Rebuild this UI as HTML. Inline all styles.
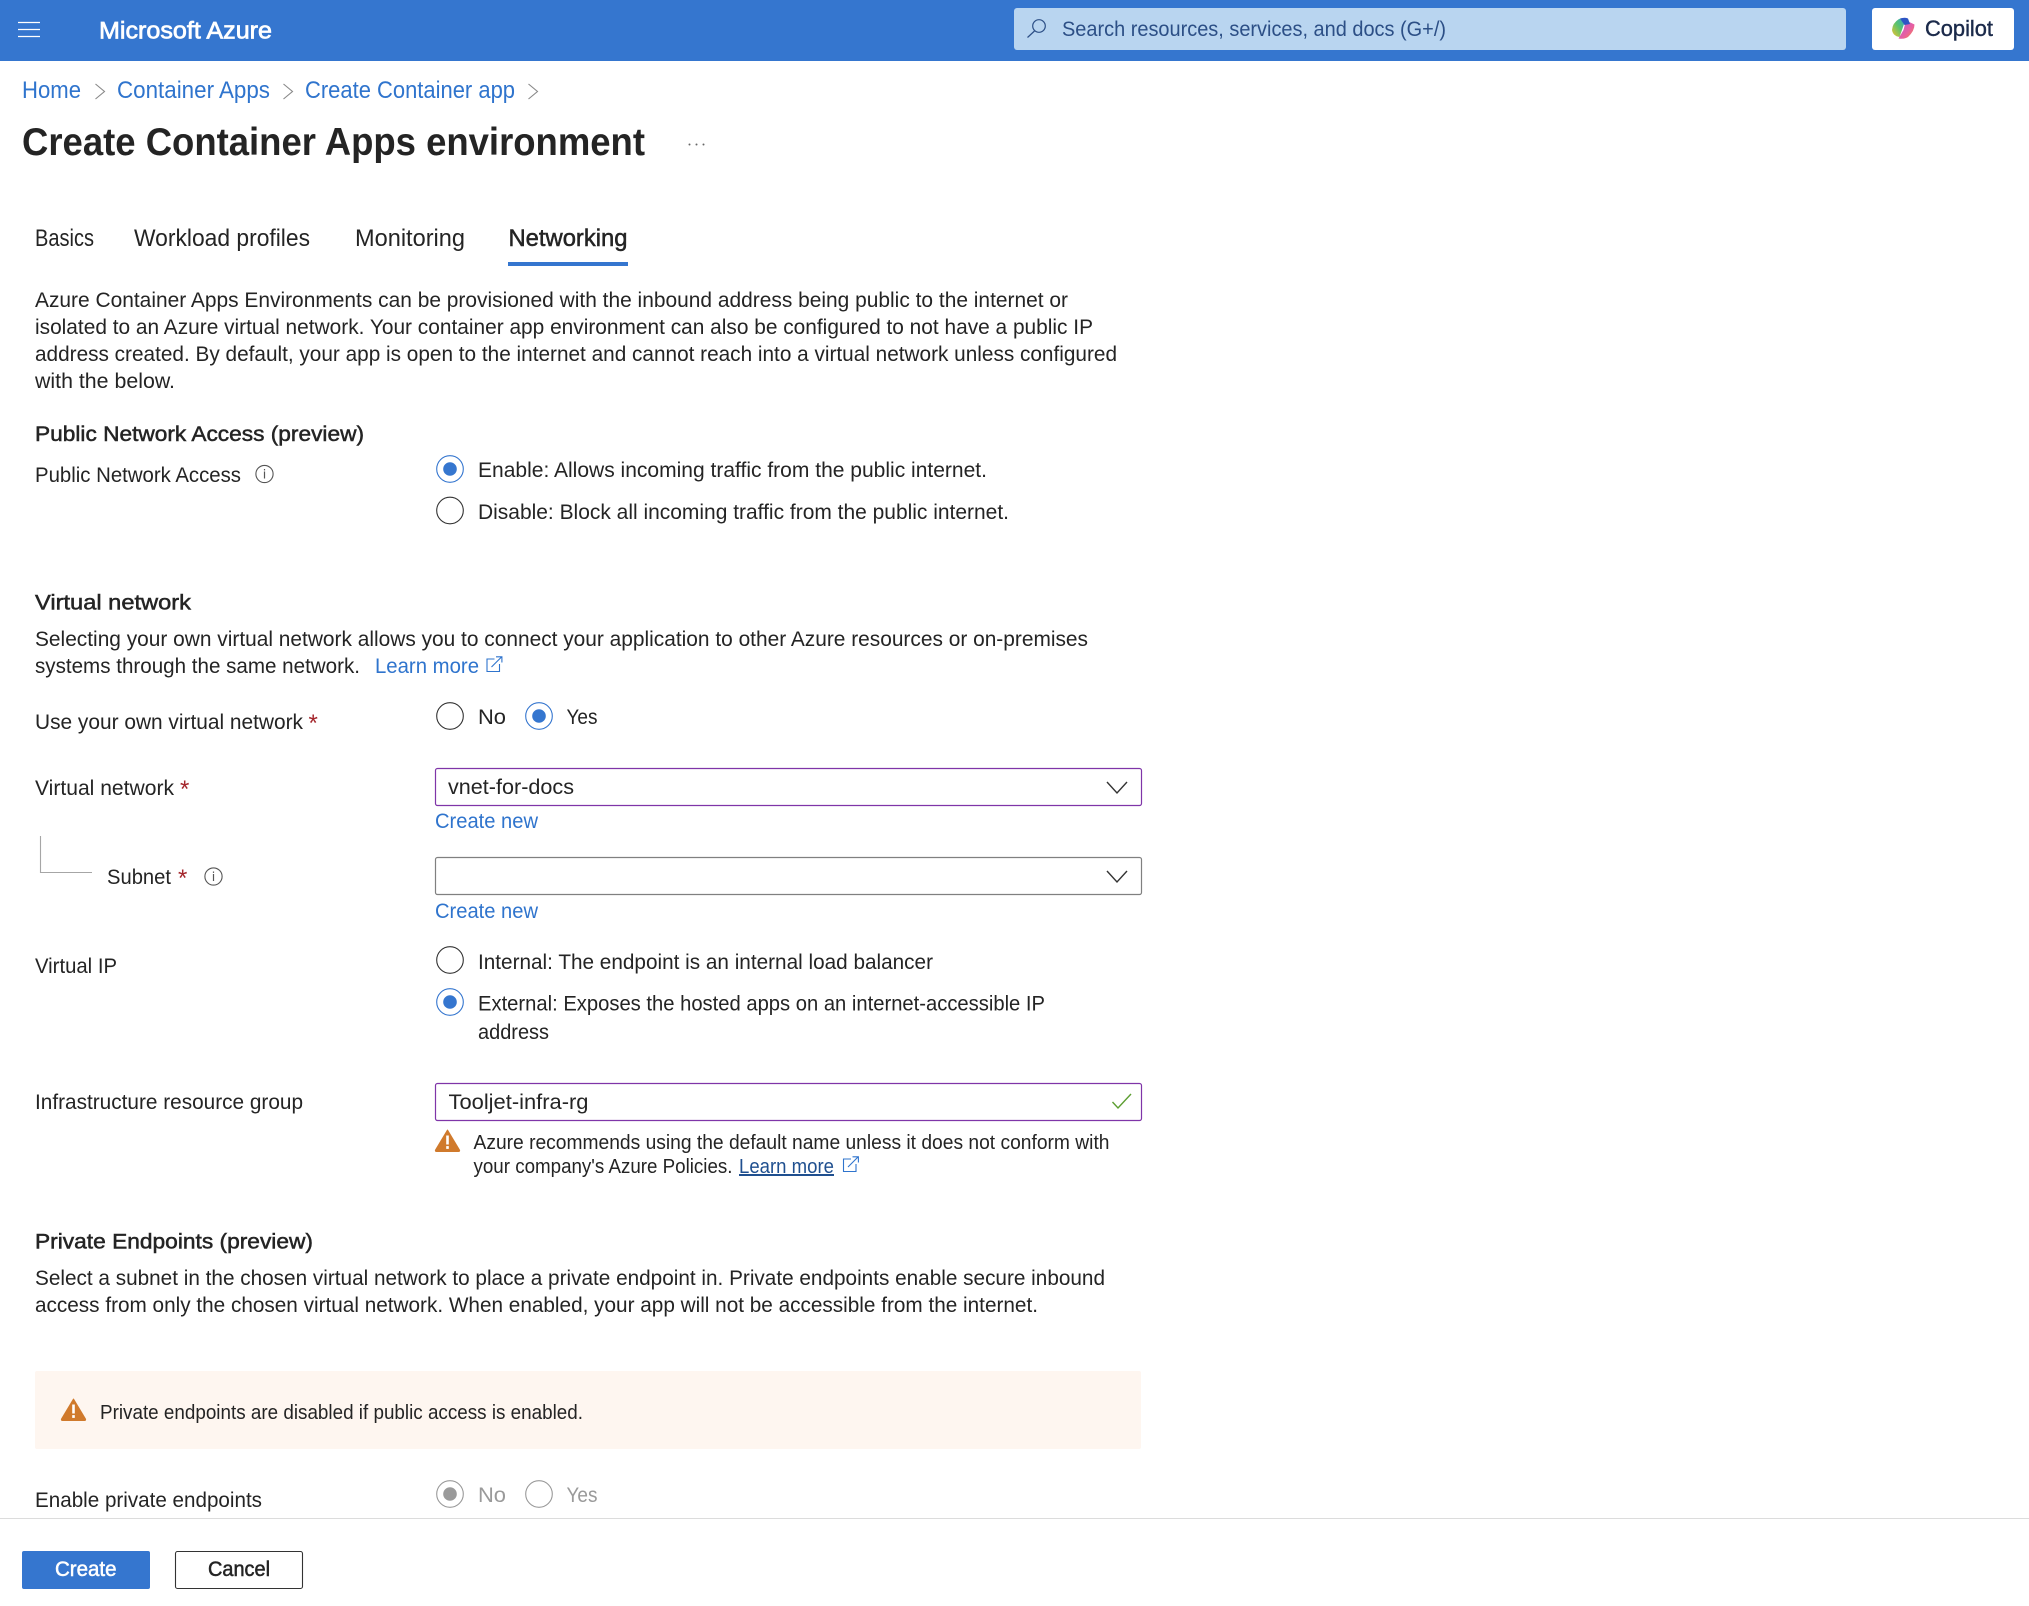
<!DOCTYPE html>
<html><head><meta charset="utf-8"><title>Create Container Apps environment</title>
<style>
html,body{margin:0;padding:0;background:#fff;width:2029px;height:1606px;overflow:hidden}
svg{display:block;font-family:"Liberation Sans",sans-serif}
text{fill:#242424;font-size:21px}
.l{fill:#2f74cd}
.s{stroke:#242424;stroke-width:.5px}
.g{fill:#9a9a9a}
.a{fill:#a4262c;font-size:24px}
</style></head><body>
<svg width="2029" height="1606" viewBox="0 0 2029 1606" xmlns="http://www.w3.org/2000/svg">
<defs>
<linearGradient id="c1" x1="0" y1="1" x2="1" y2="0"><stop offset="0" stop-color="#f2c12e"/><stop offset=".5" stop-color="#5cc46b"/><stop offset="1" stop-color="#2a9fd8"/></linearGradient>
<linearGradient id="c2" x1="0" y1="0" x2="1" y2="1"><stop offset="0" stop-color="#b45ad6"/><stop offset=".6" stop-color="#e85fa0"/><stop offset="1" stop-color="#f58a3a"/></linearGradient>
<g id="wi"><path d="M12.5 1.5 L24.5 21.5 Q25 23 23.5 23 L1.5 23 Q0 23 .5 21.5 Z" fill="#d07a2c" stroke="#d07a2c" stroke-linejoin="round"/><rect x="11.2" y="7" width="2.6" height="9" fill="#fff"/><rect x="11.2" y="17.6" width="2.6" height="2.8" fill="#fff"/></g>
<g id="ext" fill="none" stroke-width="1.1"><path d="M9 3H1.5V15.5H14V8"/><path d="M6 11L16 1M10.5 .8H16.4V6.5"/></g>
<g id="inf"><circle cx="0" cy="0" r="8.6" fill="none" stroke="#555" stroke-width="1.1"/><rect x="-.6" y="-2.5" width="1.2" height="7" fill="#555"/><rect x="-.6" y="-5" width="1.2" height="1.4" fill="#555"/></g>
<g id="chev"><path d="M0 0L10 11L20 0" fill="none" stroke="#333" stroke-width="1.4"/></g>
<g id="crumb"><path d="M0 0L9 7.5L0 15" fill="none" stroke="#888" stroke-width="1.1"/></g>
</defs>

<!-- header -->
<rect width="2029" height="61" fill="#3576cf"/>
<path d="M18 22.5H40M18 29.5H40M18 36.5H40" stroke="#fff" stroke-width="1.2"/>
<text x="99" y="38.5" style="fill:#fff;font-size:24px;stroke:#fff;stroke-width:.7px" textLength="173" lengthAdjust="spacingAndGlyphs">Microsoft Azure</text>
<rect x="1014" y="8" width="832" height="42" rx="3" fill="#b9d5f0"/>
<circle cx="1039" cy="26" r="6.3" fill="none" stroke="#2c4f86" stroke-width="1.2"/><path d="M1034.5 31L1027.5 37.5" stroke="#2c4f86" stroke-width="1.2"/>
<text x="1062" y="36" style="fill:#2c4f86" textLength="384" lengthAdjust="spacingAndGlyphs">Search resources, services, and docs (G+/)</text>
<rect x="1872" y="8" width="142" height="42" rx="3" fill="#fff"/>
<path d="M1899 19Q1903 17.5 1906 18.5L1899.5 37Q1893 36 1892 30Q1892.5 23 1899 19Z" fill="url(#c1)"/>
<path d="M1906 20.5L1914.5 24.5Q1914.5 31 1908 37Q1904 39.5 1898.5 38.5L1903.5 30Z" fill="url(#c2)"/>
<path d="M1900 18.5Q1905 17 1908 18.5L1910 24L1904.5 25Z" fill="#2d55c4"/>
<text x="1925" y="36" style="fill:#1b2a4a;font-size:22px;stroke:#1b2a4a;stroke-width:.4px" textLength="68" lengthAdjust="spacingAndGlyphs">Copilot</text>

<!-- breadcrumb -->
<text class="l" x="22" y="98" style="font-size:24px" textLength="59" lengthAdjust="spacingAndGlyphs">Home</text>
<use href="#crumb" x="95.5" y="84"/>
<text class="l" x="117" y="98" style="font-size:24px" textLength="153" lengthAdjust="spacingAndGlyphs">Container Apps</text>
<use href="#crumb" x="283.5" y="84"/>
<text class="l" x="305" y="98" style="font-size:24px" textLength="210" lengthAdjust="spacingAndGlyphs">Create Container app</text>
<use href="#crumb" x="528.5" y="84"/>

<!-- title -->
<text x="22" y="155" style="font-size:39px;font-weight:700" textLength="623" lengthAdjust="spacingAndGlyphs">Create Container Apps environment</text>
<circle cx="689.5" cy="144.5" r="1" fill="#666"/><circle cx="696.5" cy="144.5" r="1" fill="#666"/><circle cx="703.5" cy="144.5" r="1" fill="#666"/>

<!-- tabs -->
<text x="35" y="246" style="font-size:24px" textLength="59" lengthAdjust="spacingAndGlyphs">Basics</text>
<text x="134" y="246" style="font-size:24px" textLength="176" lengthAdjust="spacingAndGlyphs">Workload profiles</text>
<text x="355" y="246" style="font-size:24px" textLength="110" lengthAdjust="spacingAndGlyphs">Monitoring</text>
<text x="508.5" y="246" class="s" style="font-size:24px" textLength="119" lengthAdjust="spacingAndGlyphs">Networking</text>
<rect x="508" y="262" width="120" height="4" fill="#3576cf"/>

<!-- intro -->
<text x="35" y="307" textLength="1033" lengthAdjust="spacingAndGlyphs">Azure Container Apps Environments can be provisioned with the inbound address being public to the internet or</text>
<text x="35" y="334" textLength="1058" lengthAdjust="spacingAndGlyphs">isolated to an Azure virtual network. Your container app environment can also be configured to not have a public IP</text>
<text x="35" y="361" textLength="1082" lengthAdjust="spacingAndGlyphs">address created. By default, your app is open to the internet and cannot reach into a virtual network unless configured</text>
<text x="35" y="388" textLength="140" lengthAdjust="spacingAndGlyphs">with the below.</text>

<!-- public network -->
<text x="35" y="441" class="s" textLength="329" lengthAdjust="spacingAndGlyphs">Public Network Access (preview)</text>
<text x="35" y="482" textLength="206" lengthAdjust="spacingAndGlyphs">Public Network Access</text>
<use href="#inf" x="264.5" y="474"/>
<circle cx="450" cy="469" r="13.3" fill="#fff" stroke="#3576cf" stroke-width="1.1"/><circle cx="450" cy="469" r="6.8" fill="#3576cf"/>
<text x="478" y="477" textLength="509" lengthAdjust="spacingAndGlyphs">Enable: Allows incoming traffic from the public internet.</text>
<circle cx="450" cy="510.5" r="13.3" fill="#fff" stroke="#333" stroke-width="1.1"/>
<text x="478" y="519" textLength="531" lengthAdjust="spacingAndGlyphs">Disable: Block all incoming traffic from the public internet.</text>

<!-- vnet -->
<text x="35" y="609.5" class="s" textLength="156" lengthAdjust="spacingAndGlyphs">Virtual network</text>
<text x="35" y="646" textLength="1053" lengthAdjust="spacingAndGlyphs">Selecting your own virtual network allows you to connect your application to other Azure resources or on-premises</text>
<text x="35" y="673" textLength="325" lengthAdjust="spacingAndGlyphs">systems through the same network.</text>
<text class="l" x="375" y="673" textLength="104" lengthAdjust="spacingAndGlyphs">Learn more</text>
<use href="#ext" x="485.5" y="656" stroke="#2f74cd"/>

<text x="35" y="729" textLength="268" lengthAdjust="spacingAndGlyphs">Use your own virtual network</text>
<text x="308.5" y="731" class="a">*</text>
<circle cx="450" cy="716" r="13.3" fill="#fff" stroke="#333" stroke-width="1.1"/>
<text x="478" y="724" textLength="28" lengthAdjust="spacingAndGlyphs">No</text>
<circle cx="539" cy="716" r="13.3" fill="#fff" stroke="#3576cf" stroke-width="1.1"/><circle cx="539" cy="716" r="6.8" fill="#3576cf"/>
<text x="566.5" y="724" textLength="31" lengthAdjust="spacingAndGlyphs">Yes</text>

<text x="35" y="795" textLength="139" lengthAdjust="spacingAndGlyphs">Virtual network</text>
<text x="180" y="797" class="a">*</text>
<rect x="435.5" y="768.5" width="706" height="37" rx="2" fill="#fff" stroke="#7f35a8" stroke-width="1.2"/>
<text x="448" y="794" textLength="126" lengthAdjust="spacingAndGlyphs">vnet-for-docs</text>
<use href="#chev" x="1107" y="782"/>
<text class="l" x="435" y="828" textLength="103" lengthAdjust="spacingAndGlyphs">Create new</text>

<path d="M40.5 836V872.5H92" fill="none" stroke="#a6a6a6" stroke-width="1.1"/>
<text x="107" y="884" textLength="64" lengthAdjust="spacingAndGlyphs">Subnet</text>
<text x="178" y="886" class="a">*</text>
<use href="#inf" x="213.5" y="876.5"/>
<rect x="435.5" y="857.5" width="706" height="37" rx="2" fill="#fff" stroke="#808080" stroke-width="1.2"/>
<use href="#chev" x="1107" y="871"/>
<text class="l" x="435" y="918" textLength="103" lengthAdjust="spacingAndGlyphs">Create new</text>

<text x="35" y="973" textLength="82" lengthAdjust="spacingAndGlyphs">Virtual IP</text>
<circle cx="450" cy="960" r="13.3" fill="#fff" stroke="#333" stroke-width="1.1"/>
<text x="478" y="969" textLength="455" lengthAdjust="spacingAndGlyphs">Internal: The endpoint is an internal load balancer</text>
<circle cx="450" cy="1002" r="13.3" fill="#fff" stroke="#3576cf" stroke-width="1.1"/><circle cx="450" cy="1002" r="6.8" fill="#3576cf"/>
<text x="478" y="1010.5" textLength="567" lengthAdjust="spacingAndGlyphs">External: Exposes the hosted apps on an internet-accessible IP</text>
<text x="478" y="1039" textLength="71" lengthAdjust="spacingAndGlyphs">address</text>

<text x="35" y="1109" textLength="268" lengthAdjust="spacingAndGlyphs">Infrastructure resource group</text>
<rect x="435.5" y="1083.5" width="706" height="37" rx="2" fill="#fff" stroke="#7f35a8" stroke-width="1.2"/>
<text x="448.5" y="1109" textLength="140" lengthAdjust="spacingAndGlyphs">Tooljet-infra-rg</text>
<path d="M1112.5 1102L1118 1108L1131 1094" fill="none" stroke="#5c9e31" stroke-width="1.4"/>
<use href="#wi" x="435" y="1128.5"/>
<text x="473.5" y="1149" style="font-size:20px" textLength="636" lengthAdjust="spacingAndGlyphs">Azure recommends using the default name unless it does not conform with</text>
<text x="473.5" y="1173" style="font-size:20px" textLength="259" lengthAdjust="spacingAndGlyphs">your company's Azure Policies.</text>
<text x="739" y="1173" style="font-size:20px;fill:#1f4f8f;text-decoration:underline" textLength="95" lengthAdjust="spacingAndGlyphs">Learn more</text>
<use href="#ext" x="842" y="1156" stroke="#2f74cd"/>

<!-- private endpoints -->
<text x="35" y="1248.5" class="s" textLength="278" lengthAdjust="spacingAndGlyphs">Private Endpoints (preview)</text>
<text x="35" y="1285" textLength="1070" lengthAdjust="spacingAndGlyphs">Select a subnet in the chosen virtual network to place a private endpoint in. Private endpoints enable secure inbound</text>
<text x="35" y="1312" textLength="1003" lengthAdjust="spacingAndGlyphs">access from only the chosen virtual network. When enabled, your app will not be accessible from the internet.</text>

<rect x="35" y="1371" width="1106" height="78" rx="2" fill="#fef6f0"/>
<use href="#wi" x="61" y="1397.5"/>
<text x="100" y="1419" style="font-size:20px" textLength="483" lengthAdjust="spacingAndGlyphs">Private endpoints are disabled if public access is enabled.</text>

<text x="35" y="1507" textLength="227" lengthAdjust="spacingAndGlyphs">Enable private endpoints</text>
<circle cx="450" cy="1494" r="13.3" fill="#fff" stroke="#9a9a9a" stroke-width="1.1"/><circle cx="450" cy="1494" r="6.8" fill="#9a9a9a"/>
<text x="478" y="1502" class="g" textLength="28" lengthAdjust="spacingAndGlyphs">No</text>
<circle cx="539" cy="1494" r="13.3" fill="#fff" stroke="#9a9a9a" stroke-width="1.1"/>
<text x="566.5" y="1502" class="g" textLength="31" lengthAdjust="spacingAndGlyphs">Yes</text>

<!-- footer -->
<rect x="0" y="1518" width="2029" height="88" fill="#fff"/>
<rect x="0" y="1518" width="2029" height="1" fill="#dcdcdc"/>
<rect x="22" y="1551" width="128" height="38" rx="2" fill="#3576cf"/>
<text x="55" y="1576" style="fill:#fff;stroke:#fff;stroke-width:.5px" textLength="61.5" lengthAdjust="spacingAndGlyphs">Create</text>
<rect x="175.5" y="1551.5" width="127" height="37" rx="2" fill="#fff" stroke="#333" stroke-width="1.1"/>
<text x="208" y="1576" class="s" textLength="62" lengthAdjust="spacingAndGlyphs">Cancel</text>
</svg>
</body></html>
